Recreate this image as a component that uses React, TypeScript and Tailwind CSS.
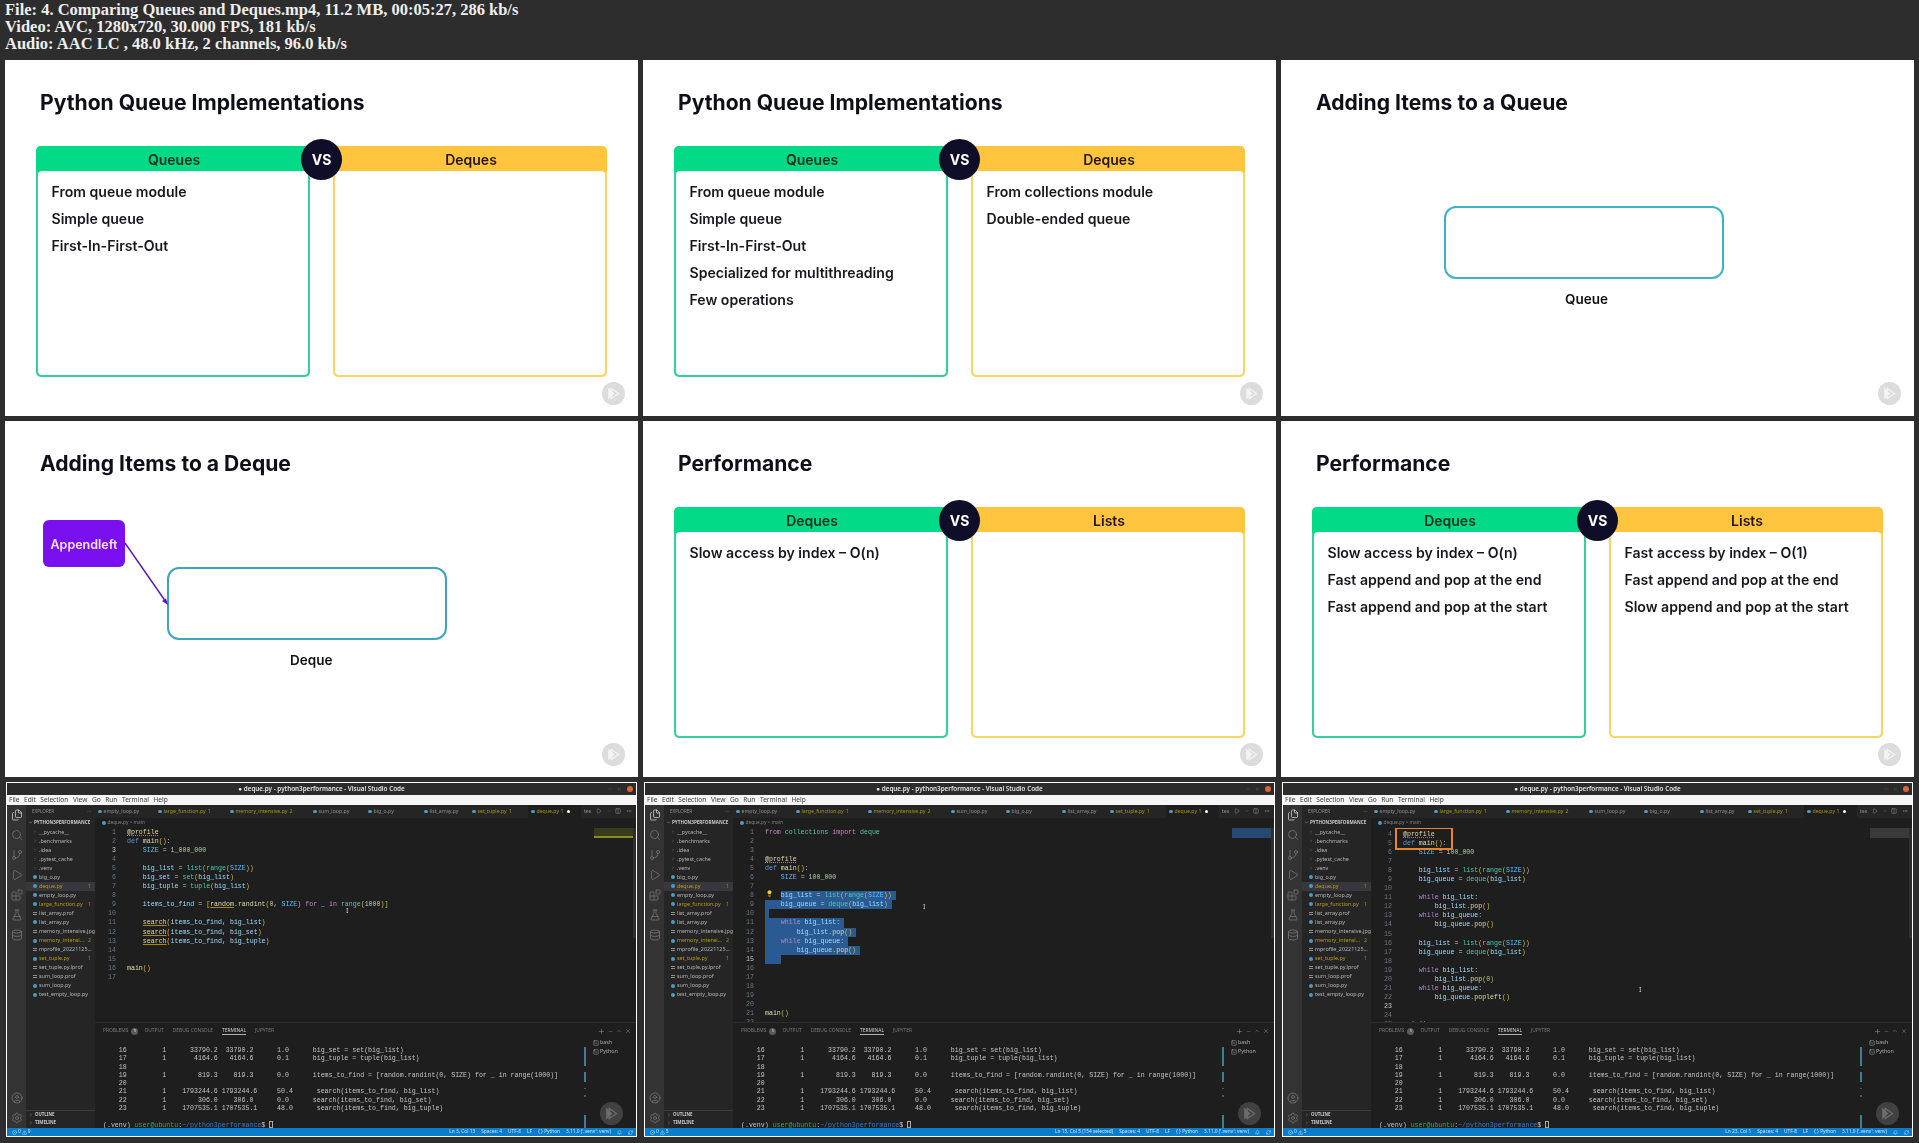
import React from "react";
import { Files, Search, GitBranch, Play, Blocks, FlaskConical, Database, CircleUser, Settings, Plus, X, ChevronUp, ChevronDown, Minus, Columns2, Ellipsis, SquareTerminal, Lightbulb, CircleX, TriangleAlert, Bell, RefreshCw, ChevronRight, Square } from "lucide-react";

const sans = "font-['Inter',sans-serif]";

function Logo({ dark }: { dark?: boolean }) {
  return (
    <div className={`absolute right-[13px] bottom-[11px] flex h-[23px] w-[23px] items-center justify-center rounded-full ${dark ? "bg-[#4a4a4a]/80" : "bg-[#dcdcdc]"}`}>
      <svg width="13" height="13" viewBox="0 0 14 14" fill="none" stroke={dark ? "#6d6d6d" : "#f4f4f4"} strokeWidth="1.3">
        <path d="M2 2v10l5-5z" fill={dark ? "#6d6d6d" : "#f4f4f4"} />
        <path d="M4.5 1.5v11l8-5.5z" />
      </svg>
    </div>
  );
}

function Title({ children }: { children: React.ReactNode }) {
  return <h2 className={`${sans} pl-[35px] pt-[29px] text-[21.1px] leading-[28px] font-bold text-[#0f0f1a]`}>{children}</h2>;
}

function Card({ title, items, yellow }: { title: string; items: string[]; yellow?: boolean }) {
  return (
    <div className={`flex h-[231px] w-[274px] flex-col rounded-[5px] px-[2px] pb-[2px] ${yellow ? "bg-[#f9d565]" : "bg-[#35cf9b]"}`}>
      <div className={`-mx-[2px] flex h-[26px] items-center justify-center rounded-t-[5px] pl-[2px] text-[14px] font-semibold ${yellow ? "bg-[#ffc53f] text-[#24170a]" : "bg-[#02da87] text-[#06301f]"}`}>{title}</div>
      <div className="-mt-[1px] flex flex-1 flex-col gap-[9px] rounded-[4px] bg-white pl-[13.500px] pt-[12px]">
        {items.map((t) => (
          <div key={t} className="h-[18px] text-[14.1px] leading-[18px] font-semibold text-[#17171f]">{t}</div>
        ))}
      </div>
    </div>
  );
}

function Compare({ title, a, b, ai, bi }: { title: string; a: string; b: string; ai: string[]; bi: string[] }) {
  return (
    <div className={`${sans} relative h-[356px] overflow-hidden bg-white blur-[0.4px]`}>
      <Title>{title}</Title>
      <div className="relative ml-[31px] mt-[29px] flex w-[571px] gap-[23px]">
        <Card title={a} items={ai} />
        <Card title={b} items={bi} yellow />
        <div className="absolute left-[265px] top-[-7px] flex h-[41px] w-[41px] items-center justify-center rounded-full bg-[#0e0e28] text-[14px] font-bold text-white">VS</div>
      </div>
      <Logo />
    </div>
  );
}

function QueueSlide() {
  return (
    <div className={`${sans} relative h-[356px] overflow-hidden bg-white blur-[0.4px]`}>
      <Title>Adding Items to a Queue</Title>
      <div className="ml-[163px] mt-[89px] h-[73px] w-[280px] rounded-[12px] border-2 border-[#3fb2c4]" />
      <div className="mt-[10px] ml-[284px] text-[13.5px] font-semibold text-[#111]">Queue</div>
      <Logo />
    </div>
  );
}

function DequeSlide() {
  return (
    <div className={`${sans} relative h-[356px] overflow-hidden bg-white blur-[0.4px]`}>
      <Title>Adding Items to a Deque</Title>
      <div className="absolute left-[38px] top-[99px] flex h-[47px] w-[82px] items-center justify-center rounded-[6px] bg-[#7a10f0] pt-[3px] text-[12.5px] font-semibold text-[#fbe6ff]">Appendleft</div>
      <svg className="absolute left-[118px] top-[120px]" width="48" height="66" viewBox="0 0 48 66" fill="none">
        <path d="M2 2L43 61" stroke="#5a16b8" strokeWidth="1.4" />
        <path d="M45 64l-6-4 4-2.500z" fill="#5a16b8" />
      </svg>
      <div className="ml-[162px] mt-[89px] h-[73px] w-[280px] rounded-[12px] border-2 border-[#3fa5bb]" />
      <div className="mt-[10px] ml-[285px] text-[13.5px] font-semibold text-[#111]">Deque</div>
      <Logo />
    </div>
  );
}

const tokenClass: Record<string, string> = {
  def: "text-[#569cd6]",
  from: "text-[#c586c0]",
  import: "text-[#c586c0]",
  while: "text-[#b08ac8]",
  for: "text-[#c586c0]",
  in: "text-[#c586c0]",
  list: "text-[#4ec9b0]",
  set: "text-[#4ec9b0]",
  tuple: "text-[#4ec9b0]",
  range: "text-[#4ec9b0]",
  deque: "text-[#4ec9b0]",
  collections: "text-[#4ec9b0]",
  main: "text-[#dcdcaa]",
  randint: "text-[#dcdcaa]",
  pop: "text-[#dcdcaa]",
  popleft: "text-[#dcdcaa]",
  SIZE: "text-[#4fc1ff]",
};

function Hi({ text }: { text: string }) {
  const parts = text.match(/(\s+|@\w+|[A-Za-z_][A-Za-z0-9_]*|\d[\d_]*|.)/g) ?? [];
  return (
    <>
      {parts.map((p, i) => {
        let c = tokenClass[p] ?? "text-[#9cdcfe]";
        if (/^\d/.test(p)) c = "text-[#b5cea8]";
        else if (/^[()\[\]]$/.test(p)) c = "text-[#d7ba3d]";
        else if (/^[=.,:]$/.test(p)) c = "text-[#c8c8c8]";
        else if (p === "@profile") c = "text-[#dcdcaa] underline decoration-dotted decoration-[#b89500]";
        else if (p === "search" || p === "random") c = "text-[#dcdcaa] underline decoration-[#a88a00]";
        return <span key={i} className={c}>{p}</span>;
      })}
    </>
  );
}

type Line = { t: string; sel?: number };

function Code({ lines, start, active }: { lines: Line[]; start: number; active: number }) {
  return (
    <div className="font-['Liberation_Mono',monospace] text-[6.6px] leading-[9.06px]">
      {lines.map((l, i) => (
        <div key={i} className="flex h-[9.06px] whitespace-pre">
          <div className={`w-[32px] shrink-0 pr-[11px] text-right ${start + i === active ? "text-[#c6c6c6]" : "text-[#6e7681]"}`}>{start + i}</div>
          {l.sel === undefined ? (
            <div><Hi text={l.t} /></div>
          ) : (
            <div className="relative">
              <span>{l.t.slice(0, l.sel)}</span>
              <span className="inline-block h-[9.06px] bg-[#2a5a92]"><Hi text={l.t.slice(l.sel) + " "} /></span>
              {start + i === 8 && <Lightbulb className="absolute left-[1px] top-[-1px] text-[#f5d142]" fill="#f5d142" size={7} />}
            </div>
          )}
        </div>
      ))}
    </div>
  );
}

const files: [string, string, string?][] = [
  ["__pycache__", "d"], [".benchmarks", "d"], [".idea", "d"], [".pytest_cache", "d"], [".venv", "d"],
  ["big_o.py", "p"], ["deque.py", "y", "1"], ["empty_loop.py", "p"], ["large_function.py", "y", "1"],
  ["list_array.prof", "f"], ["list_array.py", "p"], ["memory_intensive.jpg", "f"], ["memory_intensi...", "y", "2"],
  ["mprofile_20221125...", "f"], ["set_tuple.py", "y", "1"], ["set_tuple.py.lprof", "f"], ["sum_loop.prof", "f"],
  ["sum_loop.py", "p"], ["test_empty_loop.py", "p"],
];

function Sidebar() {
  return (
    <div className="flex w-[69px] shrink-0 flex-col overflow-hidden bg-[#252526] font-['Noto_Sans',sans-serif] text-[5.4px] leading-[9.06px] text-[#b4b4b4]">
      <div className="flex h-[13px] items-center justify-between pl-[6px] pr-[4px] text-[4.6px] text-[#8f8f8f]"><span>EXPLORER</span><span>···</span></div>
      <div className="flex h-[9.5px] items-center pl-[2px] text-[4.6px] font-bold text-[#c8c8c8]"><ChevronDown size={5} /><span className="ml-[1px] whitespace-nowrap">PYTHON3PERFORMANCE</span></div>
      {files.map(([n, k, b]) => (
        <div key={n} className={`flex h-[9.06px] shrink-0 items-center pl-[7px] pr-[4px] ${n === "deque.py" ? "bg-[#37373d]" : ""}`}>
          {k === "d" ? <ChevronRight size={4} className="mr-[2px] shrink-0 text-[#9a9a9a]" /> : k === "f" ? <span className="mr-[2px] h-[3px] w-[4px] shrink-0 border-y border-[#909090]" /> : <span className="mr-[2px] h-[4px] w-[4px] shrink-0 rounded-full bg-[#4c9bc0]" />}
          <span className={`whitespace-nowrap ${k === "y" ? "text-[#b79d12]" : ""}`}>{n}</span>
          {b && <span className="ml-auto text-[#9c8a20]">{b}</span>}
        </div>
      ))}
      <div className="flex-1" />
      <div className="flex h-[9px] items-center gap-[2px] border-t border-[#3a3a3a] pl-[3px] text-[4.4px] font-bold text-[#c8c8c8]"><ChevronRight size={4} />OUTLINE</div>
      <div className="mb-[0.500px] flex h-[9px] items-center gap-[2px] pl-[3px] text-[4.4px] font-bold text-[#c8c8c8]"><ChevronRight size={4} />TIMELINE</div>
    </div>
  );
}

const tabs: [string, number, boolean, string?][] = [
  ["empty_loop.py", 60, false], ["large_function.py", 72, true, "1"], ["memory_intensive.py", 83, true, "2"], ["sum_loop.py", 55, false],
  ["big_o.py", 56, false], ["list_array.py", 48, false], ["set_tuple.py", 59, true, "1"],
];

function Tabs() {
  return (
    <div className="flex h-[13px] shrink-0 items-center bg-[#252526] font-['Noto_Sans',sans-serif] text-[5.2px] text-[#8e8e8e]">
      {tabs.map(([n, w, y, b]) => (
        <div key={n} className={`flex h-full shrink-0 items-center gap-[2px] pl-[3px] ${y ? "text-[#a8950f]" : ""}`} style={{ width: w }}>
          <span className="h-[3.500px] w-[3.500px] rounded-full bg-[#4c9bc0]" />
          <span>{n}</span>{b && <span>{b}</span>}
        </div>
      ))}
      <div className="flex h-full w-[53px] shrink-0 items-center gap-[2px] bg-[#1e1e1e] pl-[3px] text-[#a8950f]">
        <span className="h-[3.500px] w-[3.500px] rounded-full bg-[#4c9bc0]" />deque.py 1<span className="ml-[2px] h-[3px] w-[3px] rounded-full bg-white" />
      </div>
      <div className="flex flex-1 items-center justify-between pl-[3px] pr-[4px]">
        <span>tes</span>
        <Play size={6} /><ChevronDown size={4} /><Columns2 size={6} /><Ellipsis size={6} />
      </div>
    </div>
  );
}

const term = [
  "    16         1      33790.2  33790.2      1.0      big_set = set(big_list)",
  "    17         1       4164.6   4164.6      0.1      big_tuple = tuple(big_list)",
  "    18",
  "    19         1        819.3    819.3      0.0      items_to_find = [random.randint(0, SIZE) for _ in range(1000)]",
  "    20",
  "    21         1    1793244.6 1793244.6     50.4      search(items_to_find, big_list)",
  "    22         1        306.0    306.0      0.0      search(items_to_find, big_set)",
  "    23         1    1707535.1 1707535.1     48.0      search(items_to_find, big_tuple)",
];

function Panel({ problems }: { problems: string }) {
  return (
    <div className="relative flex h-[106px] shrink-0 flex-col border-t border-[#2c2c2c] bg-[#1e1e1e]">
      <div className="flex h-[15px] shrink-0 items-center pl-[8px] pt-[1px] font-['Noto_Sans',sans-serif] text-[4.9px] text-[#7a7a7a]">
        <span>PROBLEMS</span>
        <span className="ml-[3px] flex h-[7px] w-[7px] items-center justify-center rounded-full bg-[#5a5a5a] text-[4px] text-[#ddd]">{problems}</span>
        <span className="ml-[6px]">OUTPUT</span>
        <span className="ml-[9px]">DEBUG CONSOLE</span>
        <span className="ml-[9px] border-b border-[#b0b0b0] leading-[7px] text-[#cfcfcf]">TERMINAL</span>
        <span className="ml-[9px]">JUPYTER</span>
        <span className="ml-auto mr-[5px] flex items-center gap-[3px] text-[#8a8a8a]"><Plus size={7} /><Minus size={5} /><ChevronUp size={6} /><X size={6} /></span>
      </div>
      <div className="flex min-h-0 flex-1">
        <div className="min-w-0 flex-1 overflow-hidden whitespace-pre pl-[8px] pt-[9px] font-['Liberation_Mono',monospace] text-[6.6px] leading-[8.3px] text-[#c4c4c4]">
          {term.map((l, i) => <div key={i} className="h-[8.3px]">{l}</div>)}
          <div className="h-[7.500px]" />
          <div className="h-[8.3px]">(.venv) <span className="text-[#1fb45a]">user@ubuntu</span>:<span className="text-[#3a78c8]">~/python3performance</span>$ <span className="inline-block h-[7.500px] w-[4px] border border-[#aaa] align-middle" /></div>
        </div>
        <div className="mr-[7px] flex w-[2px] shrink-0 flex-col gap-[6px] pt-[9px]">
          <div className="h-[22px] bg-[#3e7f94]" /><div className="h-[11px] bg-[#3e7f94]" /><div className="h-[2px] bg-[#555]" /><div className="h-[2px] bg-[#555]" /><div className="mt-[12px] h-[15px] bg-[#3e7f94]" />
        </div>
        <div className="w-[43px] shrink-0 font-['Noto_Sans',sans-serif] text-[5.4px] leading-[9.3px] text-[#a8a8a8]">
          <div className="flex items-center gap-[1px]"><SquareTerminal size={6} />bash</div>
          <div className="flex items-center gap-[1px]"><SquareTerminal size={6} />Python</div>
        </div>
      </div>
    </div>
  );
}

function Activity() {
  const cls = "shrink-0";
  return (
    <div className="flex w-[19px] shrink-0 flex-col items-center gap-[8px] bg-[#333333] pt-[4px] pb-[4px] text-[#7c7c7c]">
      <Files size={12} strokeWidth={1.4} className={`${cls} text-[#e0e0e0]`} />
      <Search size={12} strokeWidth={1.4} className={cls} />
      <GitBranch size={12} strokeWidth={1.4} className={cls} />
      <Play size={12} strokeWidth={1.4} className={cls} />
      <Blocks size={12} strokeWidth={1.4} className={cls} />
      <FlaskConical size={12} strokeWidth={1.4} className={cls} />
      <Database size={12} strokeWidth={1.4} className={cls} />
      <div className="flex-1" />
      <CircleUser size={12} strokeWidth={1.4} className={cls} />
      <Settings size={12} strokeWidth={1.4} className={cls} />
    </div>
  );
}

function Frame({ lines, start, active, ln, problems, pt, cursor, box, mini }: { lines: Line[]; start: number; active: number; ln: string; problems: string; pt?: boolean; cursor: [number, number]; box?: boolean; mini: string }) {
  return (
    <div className="relative mx-px flex h-[355px] flex-col overflow-hidden border border-white bg-[#1e1e1e] blur-[0.5px]">
      <div className="relative flex h-[12px] shrink-0 items-center justify-center bg-[#2b2b2b] font-['Noto_Sans',sans-serif] text-[6.3px] font-semibold text-[#e6e6e6]">
        ● deque.py - python3performance - Visual Studio Code
        <div className="absolute right-[3px] flex items-center gap-[6px] text-[#777]"><Minus size={4} /><Square size={3} /><span className="h-[6px] w-[6px] rounded-full bg-[#d9653b]" /></div>
      </div>
      <div className="flex h-[10px] shrink-0 items-center gap-[4.500px] bg-[#f6f6f6] pl-[2px] font-['Noto_Sans',sans-serif] text-[6.6px] text-[#3c3c3c]">
        {["File", "Edit", "Selection", "View", "Go", "Run", "Terminal", "Help"].map((m) => <span key={m}>{m}</span>)}
      </div>
      <div className="flex min-h-0 flex-1">
        <Activity />
        <Sidebar />
        <div className="flex min-w-0 flex-1 flex-col">
          <Tabs />
          <div className="flex h-[10px] shrink-0 items-center gap-[2px] pl-[7px] font-['Noto_Sans',sans-serif] text-[4.8px] text-[#808080]"><span className="h-[3.500px] w-[3.500px] rounded-full bg-[#4c9bc0]" />deque.py &gt; main</div>
          <div className={`relative min-h-0 flex-1 overflow-hidden ${pt ? "pt-[2px]" : ""}`}>
            <Code lines={lines} start={start} active={active} />
            <div className={`absolute right-[2px] top-0 h-[10px] w-[40px] ${mini}`} />
            <div className="absolute right-0 top-0 h-[110px] w-[3px] bg-[#2e2e2e]" />
            {box && <div className="absolute left-[24px] top-[-1px] h-[23px] w-[58px] border-2 border-[#e8842c]" />}
            <div className="absolute text-[7px] leading-[7px] text-[#dddddd]" style={{ left: cursor[0], top: cursor[1] }}>I</div>
          </div>
          <Panel problems={problems} />
        </div>
      </div>
      <div className="flex h-[8px] shrink-0 items-center justify-between bg-[#0a7ccc] pl-[5px] pr-[3px] font-['Noto_Sans',sans-serif] text-[4.8px] text-[#cfe6f7]">
        <span className="flex items-center gap-[1px]"><CircleX size={5} />0<TriangleAlert size={5} />{problems}</span>
        <span className="flex items-center gap-[6px]"><span>{ln}</span><span>Spaces: 4</span><span>UTF-8</span><span>LF</span><span>{"{ }"} Python</span><span>3.11.0 ('.venv': venv)</span><Bell size={5} /><RefreshCw size={5} /></span>
      </div>
      <Logo dark />
    </div>
  );
}

const l = (s: string[]): Line[] => s.map((t) => ({ t }));

const f1 = l([
  "@profile", "def main():", "    SIZE = 1_000_000", "", "    big_list = list(range(SIZE))", "    big_set = set(big_list)", "    big_tuple = tuple(big_list)", "",
  "    items_to_find = [random.randint(0, SIZE) for _ in range(1000)]", "", "    search(items_to_find, big_list)", "    search(items_to_find, big_set)", "    search(items_to_find, big_tuple)", "", "", "main()", "",
]);

const f2: Line[] = [
  { t: "from collections import deque" }, { t: "" }, { t: "" }, { t: "@profile" }, { t: "def main():" }, { t: "    SIZE = 100_000" }, { t: "" },
  { t: "    big_list = list(range(SIZE))", sel: 4 }, { t: "    big_queue = deque(big_list)", sel: 0 }, { t: "", sel: 0 },
  { t: "    while big_list:", sel: 0 }, { t: "        big_list.pop()", sel: 0 }, { t: "    while big_queue:", sel: 0 }, { t: "        big_queue.pop()", sel: 0 }, { t: "   ", sel: 0 },
  { t: "" }, { t: "" }, { t: "" }, { t: "" }, { t: "" }, { t: "main()" }, { t: "" },
];

const f3 = l([
  "@profile", "def main():", "    SIZE = 100_000", "", "    big_list = list(range(SIZE))", "    big_queue = deque(big_list)", "",
  "    while big_list:", "        big_list.pop()", "    while big_queue:", "        big_queue.pop()", "",
  "    big_list = list(range(SIZE))", "    big_queue = deque(big_list)", "",
  "    while big_list:", "        big_list.pop(0)", "    while big_queue:", "        big_queue.popleft()", "", "", "main()",
]);

export default function App() {
  const hdr = "font-['Liberation_Serif',serif] text-[16.5px] leading-[17px] font-bold text-[#eeeeee]";
  return (
    <div className="h-[1143px] w-[1919px] overflow-hidden bg-[#2d2d2d]">
      <div className={`h-[60px] pl-[5px] pt-[1px] ${hdr}`}>
        <div>File: 4. Comparing Queues and Deques.mp4, 11.2 MB, 00:05:27, 286 kb/s</div>
        <div>Video: AVC, 1280x720, 30.000 FPS, 181 kb/s</div>
        <div>Audio: AAC LC , 48.0 kHz, 2 channels, 96.0 kb/s</div>
      </div>
      <div className="grid grid-cols-[633px_633px_633px] gap-[5px] px-[5px]">
        <Compare title="Python Queue Implementations" a="Queues" b="Deques" ai={["From queue module", "Simple queue", "First-In-First-Out"]} bi={[]} />
        <Compare title="Python Queue Implementations" a="Queues" b="Deques" ai={["From queue module", "Simple queue", "First-In-First-Out", "Specialized for multithreading", "Few operations"]} bi={["From collections module", "Double-ended queue"]} />
        <QueueSlide />
        <DequeSlide />
        <Compare title="Performance" a="Deques" b="Lists" ai={["Slow access by index – O(n)"]} bi={[]} />
        <Compare title="Performance" a="Deques" b="Lists" ai={["Slow access by index – O(n)", "Fast append and pop at the end", "Fast append and pop at the start"]} bi={["Fast access by index – O(1)", "Fast append and pop at the end", "Slow append and pop at the start"]} />
        <Frame lines={f1} start={1} active={3} ln="Ln 3, Col 13" problems="9" cursor={[251, 79]} mini="border-b-2 border-[#8a8a20] bg-[#3a3a1c]" />
        <Frame lines={f2} start={1} active={15} ln="Ln 15, Col 5 (154 selected)" problems="5" cursor={[190, 75]} mini="bg-[#2a5b96]/70" />
        <Frame lines={f3} start={4} active={23} ln="Ln 23, Col 1" problems="5" pt box cursor={[268, 158]} mini="bg-[#3a3a3a]" />
      </div>
    </div>
  );
}
